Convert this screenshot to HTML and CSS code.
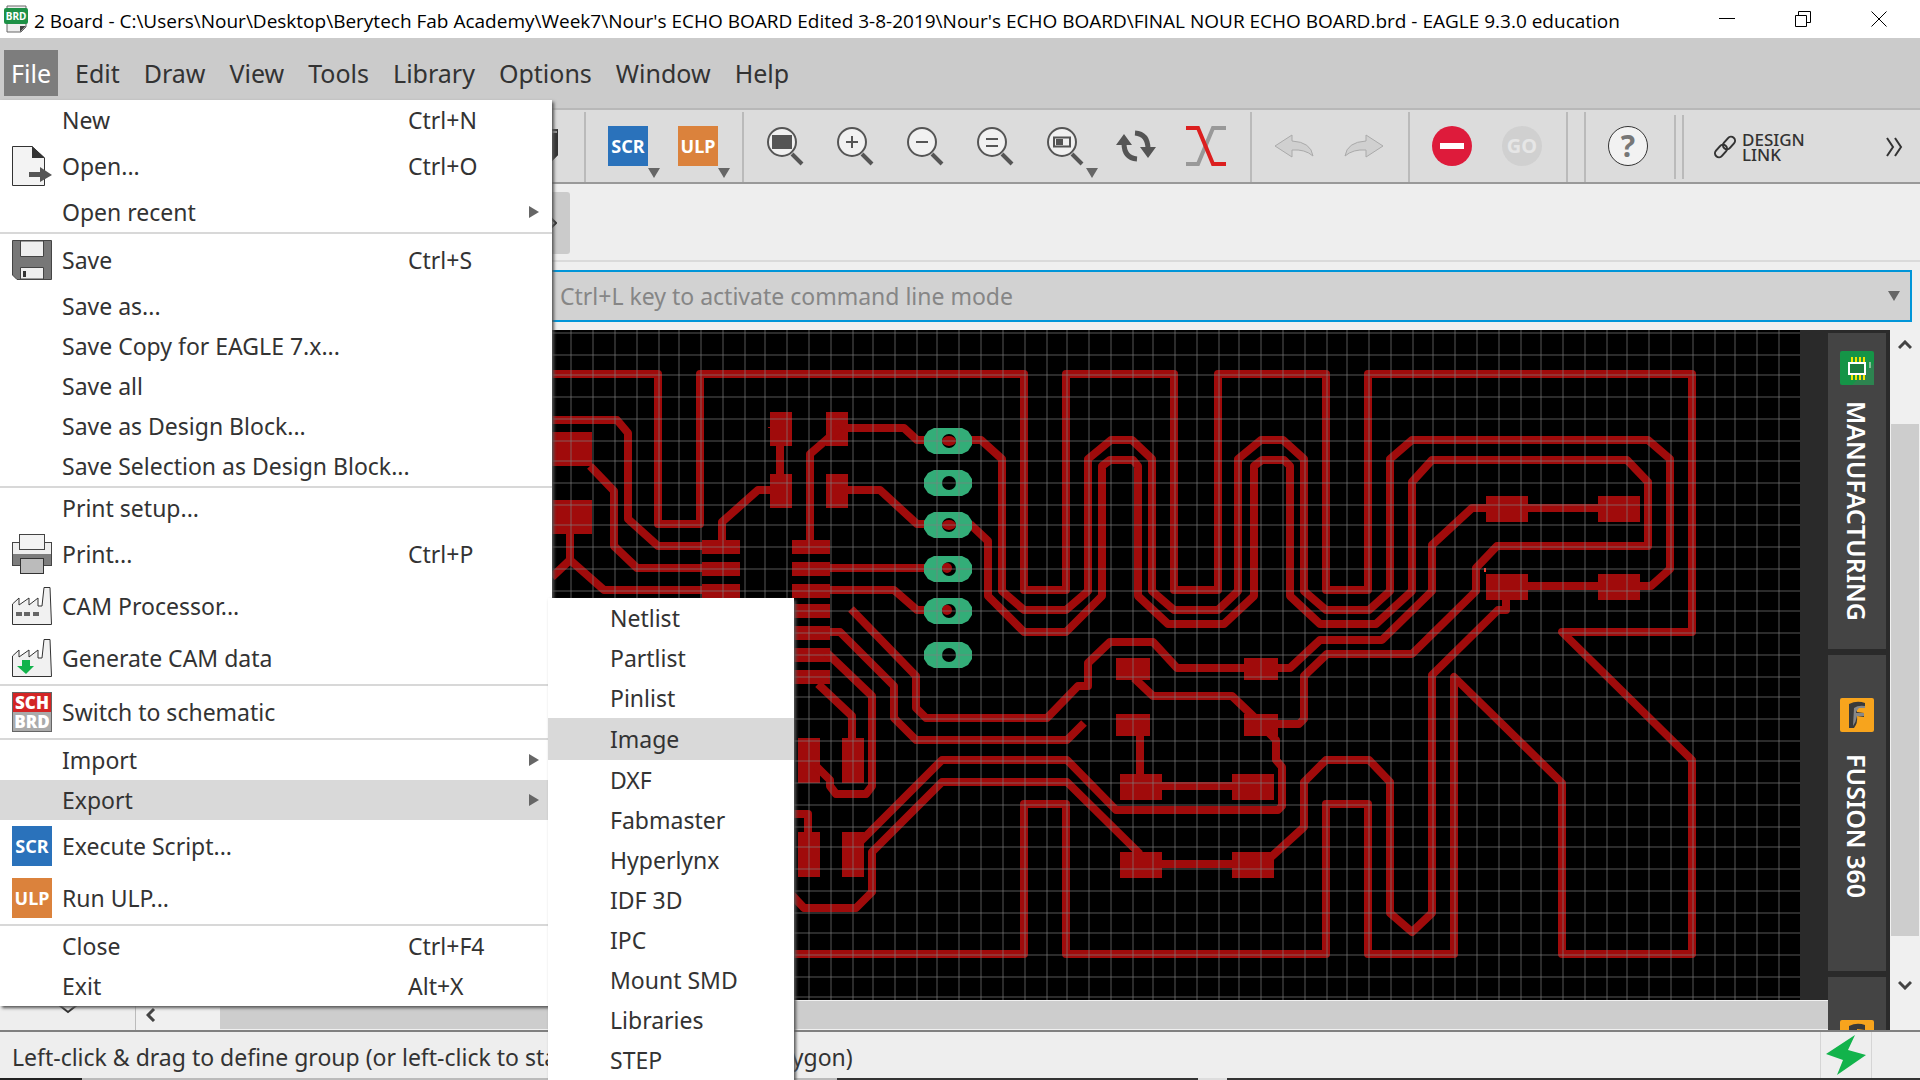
FILE: index.html
```html
<!DOCTYPE html>
<html lang="en">
<head>
<meta charset="utf-8">
<title>2 Board - EAGLE 9.3.0 education</title>
<link rel="stylesheet" href="styles.css">
</head>
<body>
<div class="app">
  <header class="titlebar">
    <svg class="doc-icon" width="24" height="28" viewBox="0 0 24 28"><path d="M3 1H22V22L17 27H3Z" fill="#eee" stroke="#666"/><path d="M16 27V21H22Z" fill="#444"/><rect width="24" height="16" y="3" rx="2" fill="#1e9146"/><text x="12" y="15" text-anchor="middle" class="brd-text">BRD</text></svg>
    <h1 class="title">2 Board - C:\Users\Nour\Desktop\Berytech Fab Academy\Week7\Nour's ECHO BOARD Edited 3-8-2019\Nour's ECHO BOARD\FINAL NOUR ECHO BOARD.brd - EAGLE 9.3.0 education</h1>
    <div class="window-buttons">
      <button aria-label="Minimize"><svg width="16" height="16"><path d="M0 7.5H16"/></svg></button>
      <button aria-label="Restore"><svg width="16" height="16"><path d="M.5 4.5H11.5V15.500H.5ZM3.500 4V.5H15.500V11.500H12"/></svg></button>
      <button aria-label="Close"><svg width="16" height="16"><path d="M.5 .5L15.500 15.500M15.500 .5L.5 15.500"/></svg></button>
    </div>
  </header>

  <nav class="menubar">
    <button class="open">File</button><button>Edit</button><button>Draw</button><button>View</button><button>Tools</button><button>Library</button><button>Options</button><button>Window</button><button>Help</button>
  </nav>

  <div class="toolbar">
    <div class="tools tools-first">
      <svg width="40" height="40" viewBox="0 0 40 40"><path d="M2 10L10 2H40V28L32 36H2Z" fill="#444"/><path d="M32 10L40 2V28L32 36Z" fill="#333"/><path d="M28 5H39" stroke="#999" stroke-width="2"/></svg>
    </div>
    <div class="tools">
      <button class="tool has-menu"><span class="badge blue">SCR</span></button>
      <button class="tool has-menu"><span class="badge orange">ULP</span></button>
    </div>
    <div class="tools">
      <button class="tool" aria-label="Zoom to fit"><svg class="lens" width="40" height="40"><circle cx="16" cy="16" r="14"/><path d="M26 28L36 38" class="handle"/><rect x="7" y="10" width="18" height="12" fill="#555"/></svg></button>
      <button class="tool" aria-label="Zoom in"><svg class="lens" width="40" height="40"><circle cx="16" cy="16" r="14"/><path d="M26 28L36 38" class="handle"/><path d="M10 16H22M16 10V22"/></svg></button>
      <button class="tool" aria-label="Zoom out"><svg class="lens" width="40" height="40"><circle cx="16" cy="16" r="14"/><path d="M26 28L36 38" class="handle"/><path d="M10 16H22"/></svg></button>
      <button class="tool" aria-label="Zoom redraw"><svg class="lens" width="40" height="40"><circle cx="16" cy="16" r="14"/><path d="M26 28L36 38" class="handle"/><path d="M10 13H22M10 20H22"/></svg></button>
      <button class="tool has-menu" aria-label="Zoom select"><svg class="lens" width="40" height="40"><circle cx="16" cy="16" r="14"/><path d="M26 28L36 38" class="handle"/><path d="M8 11.500H24V20.500H8Z"/><rect x="11" y="14" width="5" height="4" fill="#555"/></svg></button>
      <button class="tool" aria-label="Refresh"><svg width="40" height="40"><g fill="none" stroke="#555" stroke-width="5"><path d="M19 7Q32 8 32 23"/><path d="M21 33Q8 32 8 17"/></g><path d="M24 21H40L32 32ZM0 19H16L8 8Z" fill="#555"/></svg></button>
      <button class="tool" aria-label="Ripup"><svg width="40" height="40"><g fill="none" stroke-width="4"><path d="M0 38H12L27 2H40" stroke="#999"/><path d="M0 2H12L27 38H40" stroke="#dc1f1f"/></g></svg></button>
    </div>
    <div class="tools">
      <button class="tool" aria-label="Undo"><svg width="40" height="24"><path d="M1 12L18 1V7Q37 8 39 22Q31 15 18 16V23Z" fill="#d0d0d0" stroke="#aaa"/></svg></button>
      <button class="tool" aria-label="Redo"><svg width="40" height="24"><path d="M39 12L22 1V7Q3 8 1 22Q9 15 22 16V23Z" fill="#d0d0d0" stroke="#aaa"/></svg></button>
    </div>
    <div class="tools">
      <button class="tool" aria-label="Stop"><svg width="40" height="40"><circle cx="20" cy="20" r="20" fill="#de1b3b"/><rect x="8" y="17" width="24" height="6" fill="#fff"/></svg></button>
      <button class="tool"><span class="go">GO</span></button>
    </div>
    <div class="tools"></div>
    <div class="tools">
      <button class="tool"><span class="help">?</span></button>
    </div>
    <div class="grip"></div>
    <button class="design-link"><svg width="22" height="24" viewBox="0 0 22 24" fill="none" stroke="#333" stroke-width="2"><rect x="-4" y="-7" width="8" height="14" rx="4" transform="translate(15 8) rotate(42)"/><rect x="-4" y="-7" width="8" height="14" rx="4" transform="translate(7 16) rotate(42)"/></svg><span>DESIGN<br>LINK</span></button>
    <button class="more" aria-label="More tools"><svg width="18" height="20" fill="none" stroke="#333" stroke-width="2"><path d="M1 1L7 10L1 19M9 1L15 10L9 19"/></svg></button>
  </div>

  <div class="params"><button class="expander" aria-label="Expand"><svg width="6" height="12" fill="none" stroke="#333" stroke-width="2"><path d="M0 1L5 6L0 11"/></svg></button></div>

  <div class="command">
    <div class="combo"><input type="text" aria-label="Command line" placeholder="Ctrl+L key to activate command line mode"><span class="caret"></span></div>
  </div>

  <main class="workspace">
    <aside class="palette"><svg width="20" height="10" fill="none" stroke="#333" stroke-width="2"><path d="M1 1L10 8L19 1"/></svg></aside>
    <div class="editor">
      <div class="canvas">
        <svg class="board" viewBox="136 330 1664 670" preserveAspectRatio="xMinYMin slice">
          <g class="pads">
            <path d="M552 432h40v34h-40zM552 500h40v34h-40zM702 540h38v14h-38zM702 562h38v14h-38zM702 584h38v14h-38z"/>
            <path d="M792 540h38v14h-38zM792 562h38v14h-38zM792 584h38v14h-38zM792 604h38v14h-38zM792 626h38v14h-38zM792 648h38v14h-38zM792 670h38v14h-38z"/>
            <path d="M770 412h22v34h-22zM770 474h22v34h-22zM826 412h22v34h-22zM826 474h22v34h-22z"/>
            <path d="M798 738h22v45h-22zM842 738h22v45h-22zM798 832h22v45h-22zM842 832h22v45h-22z"/>
            <path d="M1116 658h34v22h-34zM1116 714h34v22h-34zM1244 658h34v22h-34zM1244 714h34v22h-34z"/>
            <path d="M1120 774h42v26h-42zM1232 774h42v26h-42zM1120 852h42v26h-42zM1232 852h42v26h-42z"/>
            <path d="M1486 496h42v26h-42zM1598 496h42v26h-42zM1486 574h42v26h-42zM1598 574h42v26h-42z"/>
          </g>
          <g class="traces">
            <path d="M540 374H658V524H700V374H1024V590H1066V374H1174V590H1218V374H1326V590H1368V374H1692V632H1562L1692 760V954H1562V783L1454 677V954H1368V804H1326V954H1066V804H1024V954H540"/>
            <path d="M540 420H617L628 433V519L658 546H702M590 466L614 491V546L637 568H702M570 534V560L604 590H702M570 560L552 577"/>
            <path d="M722 544V522L758 490H775M780 446V474M772 428V427M840 428L810 454V542"/>
            <path d="M848 428H904L917 440H930M966 440H981L1002 459V591L1024 610H1066L1088 591V459L1111 440H1132L1152 459V591L1174 610H1218L1238 591V459L1261 440H1283L1304 459V591L1326 610H1369L1390 591V459L1412 440H1648L1670 459V569L1651 586H1512"/>
            <path d="M848 490H880L917 524H930M970 524L988 541V596L1024 632H1066L1102 596V466L1110 460H1133L1138 466V596L1168 624H1224L1254 596V466L1262 460H1284L1290 466V596L1320 624H1376L1412 591V482L1432 460H1627L1648 482V546H1497L1476 568V591L1412 654H1327L1304 676V719L1299 724H1270"/>
            <path d="M830 568H930M830 590H894L917 610H930"/>
            <path d="M1620 508H1472L1432 545V591L1382 640H1320L1290 668H1177L1153 642H1110L1088 663V686H1078L1047 718H926L916 708V676L851 609"/>
            <path d="M826 632H840L894 686V718L916 740H1067L1084 723M826 652L872 696V786L866 794H836L830 786V780L816 766M818 684L852 716V740"/>
            <path d="M790 814H808V834M790 893L804 908H856L872 892V852L942 782H1067L1140 854M860 842L942 760H1067L1116 810H1278L1282 806V767L1276 760V740L1268 732"/>
            <path d="M1134 678L1153 696H1232L1255 718M1140 734V776M1160 786H1234M1160 864H1234M1270 858L1304 827V782L1326 760H1369L1390 782V913L1412 932L1432 913V675L1498 610H1506V598"/>
          </g>
          <g class="vias">
            <path d="M934 428h28l6 3 4 6v8l-4 6-6 3h-28l-6-3-4-6v-8l4-6z"/>
            <path d="M934 470h28l6 3 4 6v8l-4 6-6 3h-28l-6-3-4-6v-8l4-6z"/>
            <path d="M934 512h28l6 3 4 6v8l-4 6-6 3h-28l-6-3-4-6v-8l4-6z"/>
            <path d="M934 556h28l6 3 4 6v8l-4 6-6 3h-28l-6-3-4-6v-8l4-6z"/>
            <path d="M934 598h28l6 3 4 6v8l-4 6-6 3h-28l-6-3-4-6v-8l4-6z"/>
            <path d="M934 642h28l6 3 4 6v8l-4 6-6 3h-28l-6-3-4-6v-8l4-6z"/>
          </g>
          <g><circle cx="949" cy="441" r="7"/><circle cx="949" cy="483" r="7"/><circle cx="949" cy="525" r="7"/><circle cx="949" cy="569" r="7"/><circle cx="949" cy="611" r="7"/><circle cx="949" cy="655" r="7"/></g>
          <g class="pads"><ellipse cx="949" cy="441" rx="7" ry="5"/><ellipse cx="949" cy="525" rx="7" ry="5"/><circle cx="947" cy="568" r="5"/><circle cx="947" cy="610" r="5"/></g>
          <path d="M1484 568h2v4h-2z" fill="#ff3a2a"/>
          <g class="grid">
            <path d="M571 330v670M593 330v670M615 330v670M637 330v670M659 330v670M679 330v670M701 330v670M723 330v670M745 330v670M765 330v670M787 330v670M809 330v670M831 330v670M853 330v670M873 330v670M895 330v670M917 330v670M937 330v670M959 330v670M981 330v670M1003 330v670M1025 330v670M1047 330v670M1067 330v670M1089 330v670M1111 330v670M1133 330v670M1153 330v670M1175 330v670M1197 330v670M1219 330v670M1239 330v670M1261 330v670M1283 330v670M1305 330v670M1327 330v670M1347 330v670M1369 330v670M1391 330v670M1413 330v670M1433 330v670M1455 330v670M1477 330v670M1499 330v670M1521 330v670M1541 330v670M1563 330v670M1585 330v670M1607 330v670M1627 330v670M1649 330v670M1671 330v670M1693 330v670M1715 330v670M1735 330v670M1757 330v670M1779 330v670"/>
            <path d="M136 333h1664M136 355h1664M136 375h1664M136 397h1664M136 419h1664M136 441h1664M136 461h1664M136 483h1664M136 505h1664M136 525h1664M136 547h1664M136 569h1664M136 591h1664M136 611h1664M136 633h1664M136 655h1664M136 677h1664M136 697h1664M136 719h1664M136 741h1664M136 761h1664M136 783h1664M136 805h1664M136 827h1664M136 847h1664M136 869h1664M136 891h1664M136 913h1664M136 933h1664M136 955h1664M136 977h1664M136 997h1664"/>
          </g>
        </svg>
        <div class="canvas-edge"></div>
      </div>
      <div class="hscroll"><button aria-label="Scroll left"><svg width="10" height="14" fill="none" stroke="#444" stroke-width="3"><path d="M8 1L2 7L8 13"/></svg></button><div class="hthumb"></div></div>
    </div>
    <div class="dock">
      <button class="dock-tab"><svg width="34" height="34"><rect width="34" height="34" rx="2" fill="#159447"/><path d="M12 34L34 12V34Z" fill="#2d8450"/><path d="M12 6V29M16 6V29M20 6V29M24 6V29" stroke="#f4e500" stroke-width="2"/><rect x="9" y="12" width="16" height="11" fill="#1b7a3d" stroke="#fff" stroke-width="2"/><path d="M30 11V17" stroke="#8abf9a" stroke-width="2"/></svg><span>MANUFACTURING</span></button>
      <button class="dock-tab fusion"><svg width="34" height="34"><rect width="34" height="34" rx="2" fill="#f7a41d"/><path d="M9 6Q17 2 25 5V10L17 9V14L24 15V19L17 18Q18 25 14 30H9Z" fill="#3a3a3a"/><path d="M14 10Q18 7 25 8V10H19Q16 13 16 15H24V18H17Q16 24 13 28Z" fill="#888"/></svg><span>FUSION 360</span></button>
      <button class="dock-tab fusion" aria-label="Fusion sync"><svg width="34" height="34"><rect width="34" height="34" rx="2" fill="#f7a41d"/><path d="M9 6Q17 2 25 5V10L17 9V14L24 15V19L17 18Q18 25 14 30H9Z" fill="#3a3a3a"/></svg></button>
    </div>
    <div class="vscroll">
      <button aria-label="Scroll up"><svg width="14" height="10" fill="none" stroke="#444" stroke-width="3"><path d="M1 8L7 2L13 8"/></svg></button>
      <div class="vthumb"></div>
      <button aria-label="Scroll down"><svg width="14" height="10" fill="none" stroke="#444" stroke-width="3"><path d="M1 2L7 8L13 2"/></svg></button>
    </div>
  </main>

  <footer class="statusbar">
    <p><span>Left-click &amp; drag to define group (or left-click to start defining group</span><span>polygon)</span></p>
    <button class="bolt" aria-label="Live status"><svg width="40" height="40"><path d="M29 0L22 15L40 20L11 40L17 25L0 19Z" fill="#12b34b"/></svg></button>
  </footer>

  <div class="menu file-menu" role="menu">
    <button class="item"><span class="label">New</span><kbd>Ctrl+N</kbd></button>
    <button class="item tall"><svg width="40" height="40"><path d="M.5 .5H20L32.500 12V39.500H.5Z" fill="#f3f3f3" stroke="#333"/><path d="M20 0V12H33Z" fill="#333"/><path d="M17 26H28V21L40 29L28 36V31H17Z" fill="#555"/></svg><span class="label">Open...</span><kbd>Ctrl+O</kbd></button>
    <button class="item sub"><span class="label">Open recent</span></button>
    <hr>
    <button class="item tall"><svg width="40" height="40"><path d="M.5 .5H39.500V39.500H5L.5 35Z" fill="#777" stroke="#444"/><path d="M8.500 1V16.500H31.500V1Z" fill="#eee" stroke="#444"/><path d="M8.500 39V27.500H31.500V39Z" fill="#eee" stroke="#444"/><path d="M11 31h3v6h-3z" fill="#333"/></svg><span class="label">Save</span><kbd>Ctrl+S</kbd></button>
    <button class="item"><span class="label">Save as...</span></button>
    <button class="item"><span class="label">Save Copy for EAGLE 7.x...</span></button>
    <button class="item"><span class="label">Save all</span></button>
    <button class="item"><span class="label">Save as Design Block...</span></button>
    <button class="item"><span class="label">Save Selection as Design Block...</span></button>
    <hr>
    <button class="item"><span class="label">Print setup...</span></button>
    <button class="item tall"><svg width="40" height="40"><rect x=".5" y="8.500" width="39" height="23" fill="#eee" stroke="#444"/><path d="M1 20h38v11H1z" fill="#7d7d7d"/><rect x="7.500" y=".5" width="25" height="15" fill="#f3f3f3" stroke="#444"/><rect x="8.500" y="24.500" width="23" height="15" fill="#bbb" stroke="#333"/></svg><span class="label">Print...</span><kbd>Ctrl+P</kbd></button>
    <button class="item tall"><svg width="40" height="40"><path d="M.5 38.500V18L7 12V19L17 12V19L26 12V20H30L32 1.500H38L39.500 38.500Z" fill="#f1f1f1" stroke="#333"/><path d="M4 26h6v4H4zM12 26h6v4h-6zM21 26h6v4h-6z" fill="#666"/></svg><span class="label">CAM Processor...</span></button>
    <button class="item tall"><svg width="40" height="40"><path d="M.5 38.500V18L7 12V19L17 12V19L26 12V20H30L32 1.500H38L39.500 38.500Z" fill="#f1f1f1" stroke="#333"/><path d="M10 22H18V28H22L14 36L5 28H10Z" fill="#12b34b"/></svg><span class="label">Generate CAM data</span></button>
    <hr>
    <button class="item tall"><span class="switch-icon"><b>SCH</b><b>BRD</b></span><span class="label">Switch to schematic</span></button>
    <hr>
    <button class="item sub"><span class="label">Import</span></button>
    <button class="item sub active"><span class="label">Export</span></button>
    <button class="item tall"><span class="badge blue">SCR</span><span class="label">Execute Script...</span></button>
    <button class="item tall"><span class="badge orange">ULP</span><span class="label">Run ULP...</span></button>
    <hr>
    <button class="item"><span class="label">Close</span><kbd>Ctrl+F4</kbd></button>
    <button class="item"><span class="label">Exit</span><kbd>Alt+X</kbd></button>
  </div>

  <div class="menu export-menu" role="menu">
    <button class="item">Netlist</button>
    <button class="item">Partlist</button>
    <button class="item">Pinlist</button>
    <button class="item active">Image</button>
    <button class="item">DXF</button>
    <button class="item">Fabmaster</button>
    <button class="item">Hyperlynx</button>
    <button class="item">IDF 3D</button>
    <button class="item">IPC</button>
    <button class="item">Mount SMD</button>
    <button class="item">Libraries</button>
    <button class="item">STEP</button>
  </div>
</div>
</body>
</html>
```
FILE: styles.css
```css
* { box-sizing: border-box; }
body { margin: 0; font-family: "Noto Sans", "Open Sans", sans-serif; color: #333; }
button { border: 0; padding: 0; margin: 0; background: none; font: inherit; color: inherit; }
svg { display: block; flex: none; }

.app { position: relative; display: flex; flex-direction: column; height: 100vh; overflow: hidden; background: #efefef; }

.titlebar { display: flex; align-items: center; height: 38px; flex: none; padding: 0 25px 0 4px; gap: 6px; background: #fff; }
.brd-text { font: bold 10px "Noto Sans", sans-serif; fill: #fff; }
.title { flex: 1; margin: 0; font: 400 19px/38px "Open Sans", sans-serif; color: #000; white-space: nowrap; overflow: hidden; padding-top: 3px; }
.window-buttons { display: flex; }
.window-buttons button { width: 76px; height: 38px; display: flex; align-items: center; justify-content: center; }
.window-buttons button:last-child { margin-right: -22px; }
.window-buttons svg { fill: none; stroke: #000; }

.menubar { display: flex; flex: none; height: 70px; padding: 12px 4px; gap: 10px; background: #cbcbcb; font-size: 25px; line-height: 46px; }
.menubar button { padding: 0 7px; }
.menubar .open { background: #7d7d7d; color: #fff; }

.toolbar { display: flex; flex: none; height: 76px; padding-top: 2px; background: #dcdcdc; border-top: 2px solid #b8b8b8; border-bottom: 2px solid #999; }
.tools { display: flex; padding: 0 9px 0 7px; border-left: 2px solid #bababa; }
.tools-first { width: 584px; border: 0; padding: 15px 26px 0 0; justify-content: flex-end; }
.tool { position: relative; width: 70px; padding-bottom: 2px; display: flex; align-items: center; justify-content: center; }
.has-menu::after, .caret { content: ""; border: 6px solid transparent; border-top: 10px solid #666; border-bottom: 0; }
.has-menu::after { position: absolute; right: 3px; bottom: 4px; }
.badge { flex: none; width: 40px; height: 40px; color: #fff; font: bold 18px/40px "Liberation Sans Narrow", "Noto Sans", sans-serif; text-align: center; }
.blue { background: #2a72bb; }
.orange { background: #db823c; }
.lens circle { fill: #f1f1f1; }
.lens { fill: none; stroke: #555; stroke-width: 2; }
.lens .handle { stroke-width: 4; }
.go, .help { width: 40px; height: 40px; border-radius: 50%; text-align: center; }
.go { background: #d0d0d0; color: #e6e6e6; font: bold 20px/40px "Liberation Sans Narrow", "Noto Sans", sans-serif; }
.help { background: #f2f2f2; border: 1px solid #333; color: #777; font: bold 30px/38px "Noto Sans", sans-serif; }
.grip { width: 10px; margin: 3px 30px 3px 2px; border: solid #bababa; border-width: 0 2px; }
.design-link { display: flex; align-items: center; gap: 6px; font: 500 17px/15px "Noto Sans", sans-serif; text-align: left; }
.more { margin: 0 16px 0 auto; }

.params { flex: none; height: 78px; border-bottom: 2px solid #dadada; padding-top: 8px; background: #eeeeee; }
.expander { width: 570px; height: 62px; padding-right: 13px; display: flex; align-items: center; justify-content: flex-end; background: #cbcbcb; border-radius: 3px; }

.command { flex: none; padding: 8px 8px; }
.combo { display: flex; align-items: center; height: 52px; border: 2px solid #0095d8; background: #d2d2d2; padding-right: 10px; }
.combo input { flex: 1; height: 46px; border: 0; padding: 0 0 0 550px; background: none; font: 23px "Noto Sans", sans-serif; }
.combo input::placeholder { color: #868686; opacity: 1; }
.caret { flex: none; }

.workspace { flex: 1; min-height: 0; display: flex; }
.palette { flex: none; width: 136px; display: flex; flex-direction: column; justify-content: flex-end; align-items: center; padding-bottom: 16px; border-right: 1px solid #bbb; background: #eee; }
.editor { flex: 1; min-width: 0; display: flex; flex-direction: column; }
.canvas { flex: 1; min-height: 0; display: flex; background: #000; }
.board { flex: 1; min-width: 0; height: 100%; }
.canvas-edge { flex: none; width: 28px; background: #2a2a2a; }
.pads { fill: #a00b0b; }
.traces { fill: none; stroke: #a00b0b; stroke-width: 8; stroke-linejoin: round; }
.vias { fill: #33ad78; }
.grid { fill: none; stroke: #808080; stroke-opacity: .45; stroke-width: 1.5; }
.hscroll { flex: none; height: 30px; display: flex; padding: 1px 0; background: #f0f0f0; }
.hscroll button { width: 84px; padding: 0 0 0 10px; }
.hthumb { flex: 1; background: #cdcdcd; }
.dock { flex: none; width: 62px; display: flex; flex-direction: column; gap: 6px; padding: 3px 4px 0 0; background: #2a2a2a; overflow: hidden; }
.dock-tab { flex: none; height: 316px; display: flex; flex-direction: column; align-items: center; gap: 16px; padding-top: 18px; background: #444; color: #fff; font: 600 25px/34px "Noto Sans", sans-serif; }
.dock-tab span { writing-mode: vertical-rl; }
.fusion { padding-top: 43px; gap: 22px; }
.vscroll { flex: none; width: 30px; display: flex; flex-direction: column; padding-bottom: 30px; background: #f0f0f0; }
.vscroll button { flex: none; height: 30px; display: flex; align-items: center; justify-content: center; }
.vthumb { flex: 1; margin: 64px 1px 34px; background: #cdcdcd; }

.statusbar { flex: none; display: flex; justify-content: space-between; height: 50px; padding: 0 48px 0 12px; border-top: 2px solid #808080; background: linear-gradient(90deg, #222 82px, #bbb 82px, #bbb 837px, #333 837px, #333 1198px, #ddd 1198px, #ddd 1227px, #333 1227px) 0 46px no-repeat, #eee; font-size: 23px; line-height: 50px; }
.statusbar p { display: flex; gap: 16px; margin: 0; white-space: nowrap; }
.bolt { width: 52px; height: 46px; display: flex; align-items: center; justify-content: center; border: solid #d5d5d5; border-width: 0 1px; }

.menu { position: absolute; display: flex; flex-direction: column; background: #fff; font-size: 23px; box-shadow: 2px 2px 3px #555; }
.file-menu { left: 0; top: 100px; width: 552px; }
.export-menu { left: 548px; top: 598px; width: 246px; }
.menu hr { width: 100%; height: 2px; margin: 0; border: 0; background: #d8d8d8; }
.item { height: 40px; flex: none; display: flex; align-items: center; padding-left: 62px; text-align: left; white-space: nowrap; }
.tall { height: 52px; padding-left: 12px; gap: 10px; }
.label { flex: 1; }
.item kbd { width: 144px; font: inherit; }
.sub::after { content: ""; margin-right: 13px; border: 6px solid transparent; border-left: 10px solid #666; border-right: 0; }
.active { background: #d9d9d9; }
.export-menu .item { padding-left: 62px; }
.export-menu .active { height: 42px; }
.switch-icon { width: 40px; height: 40px; border: 1px solid #666; background: #aaa; color: #fff; font: bold 17px/19px "Liberation Sans Narrow", "Noto Sans", sans-serif; text-align: center; }
.switch-icon b { display: block; }
.switch-icon b:first-child { background: #d32525; }
```
